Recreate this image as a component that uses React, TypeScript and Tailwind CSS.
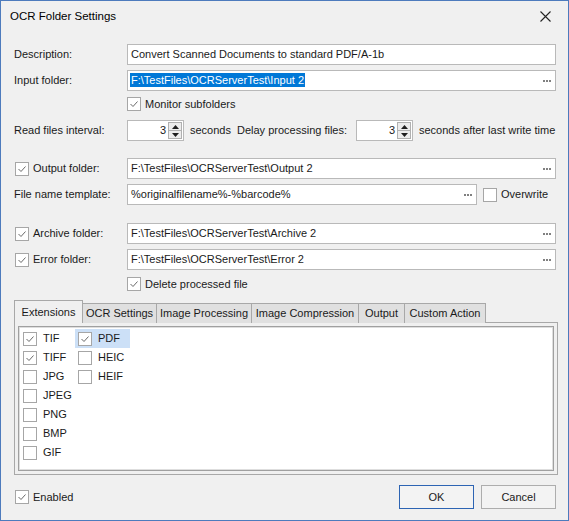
import React from "react";

function Check({ checked }: { checked?: boolean }) {
  return (
    <div className="w-[14px] h-[14px] shrink-0 bg-white border border-[#a6a6a6] flex items-center justify-center">
      {checked && (
        <svg width="12" height="12" viewBox="0 0 12 12">
          <polyline points="2.5,6 5,8.5 9.5,3.5" fill="none" stroke="#6a6a6a" strokeWidth="1" />
        </svg>
      )}
    </div>
  );
}

function Dots() {
  return (
    <svg width="8" height="2" viewBox="0 0 8 2" className="shrink-0">
      <rect x="0" y="0" width="2" height="2" fill="#808080" />
      <rect x="3" y="0" width="2" height="2" fill="#808080" />
      <rect x="6" y="0" width="2" height="2" fill="#808080" />
    </svg>
  );
}

function TextBox({ value, dots, selected, w }: { value: string; dots?: boolean; selected?: boolean; w?: string }) {
  return (
    <div className={`${w ?? "flex-1"} h-[21px] bg-white border border-[#b9b9b9] flex items-center pl-[2px] pr-[4px]`}>
      <div className="flex-1 min-w-0 whitespace-nowrap overflow-hidden leading-[15px]">
        {selected ? (
          <span className="bg-[#0078d7] text-white px-[1px] py-[1px]">{value}</span>
        ) : (
          <span className="pl-[1px]">{value}</span>
        )}
      </div>
      {dots && <Dots />}
    </div>
  );
}

function Spin({ value }: { value: string }) {
  return (
    <div className="w-[57px] h-[21px] bg-white border border-[#b9b9b9] flex items-stretch shrink-0">
      <div className="flex-1 flex items-center justify-end pr-[2px]">{value}</div>
      <div className="w-[14px] my-[1px] mr-[1px] flex flex-col border border-[#b0b0b0] bg-[#ececec]">
        <div className="flex-1 flex items-center justify-center border-b border-[#b0b0b0]">
          <svg width="7" height="4" viewBox="0 0 7 4">
            <polygon points="0,4 3.5,0 7,4" fill="#1e1e1e" />
          </svg>
        </div>
        <div className="flex-1 flex items-center justify-center">
          <svg width="7" height="4" viewBox="0 0 7 4">
            <polygon points="0,0 3.5,4 7,0" fill="#1e1e1e" />
          </svg>
        </div>
      </div>
    </div>
  );
}

function Item({ label, checked, hl }: { label: string; checked?: boolean; hl?: boolean }) {
  return (
    <div className={`w-[55px] h-[19px] flex items-center pl-[3px] gap-[6px] ${hl ? "bg-[#cce0f7]" : ""}`}>
      <Check checked={checked} />
      <span>{label}</span>
    </div>
  );
}

const tabs = [
  { label: "OCR Settings", w: "w-[75px]" },
  { label: "Image Processing", w: "w-[96px]" },
  { label: "Image Compression", w: "w-[108px]" },
  { label: "Output", w: "w-[47px]" },
  { label: "Custom Action", w: "w-[82px]" },
];

export default function App() {
  return (
    <div className="w-[569px] h-[521px] bg-[#f0f0f0] border border-[#4d7bbd] flex flex-col font-['Liberation_Sans',Arial,sans-serif] text-[11px] text-[#1a1a1a] leading-none overflow-hidden">
      <div className="h-[31px] shrink-0 flex items-center justify-between pl-[9px] pr-[17px]">
        <span className="text-[11.5px] text-black">OCR Folder Settings</span>
        <svg width="11" height="11" viewBox="0 0 11 11">
          <path d="M0.5 0.5 L10.5 10.5 M10.5 0.5 L0.5 10.5" stroke="#222" strokeWidth="1.1" />
        </svg>
      </div>

      <div className="flex flex-col pl-[13px] pr-[12px] pt-[12px]">
        <div className="flex items-center">
          <span className="w-[113px] shrink-0">Description:</span>
          <TextBox value="Convert Scanned Documents to standard PDF/A-1b" />
        </div>
        <div className="flex items-center mt-[5px]">
          <span className="w-[113px] shrink-0">Input folder:</span>
          <TextBox value="F:\TestFiles\OCRServerTest\Input 2" selected dots />
        </div>
        <div className="flex items-center h-[20px] mt-[3px] pl-[113px] gap-[4px]">
          <Check checked />
          <span>Monitor subfolders</span>
        </div>
        <div className="flex items-center mt-[6px]">
          <span className="w-[113px] shrink-0">Read files interval:</span>
          <Spin value="3" />
          <span className="ml-[6px] w-[47px]">seconds</span>
          <span className="w-[119px]">Delay processing files:</span>
          <Spin value="3" />
          <span className="ml-[6px] whitespace-nowrap">seconds after last write time</span>
        </div>
        <div className="flex items-center mt-[17px]">
          <div className="w-[113px] shrink-0 flex items-center gap-[4px] pl-[1px]">
            <Check checked />
            <span>Output folder:</span>
          </div>
          <TextBox value="F:\TestFiles\OCRServerTest\Output 2" dots />
        </div>
        <div className="flex items-center mt-[5px]">
          <span className="w-[113px] shrink-0">File name template:</span>
          <TextBox value="%originalfilename%-%barcode%" dots w="w-[350px]" />
          <div className="ml-[6px] flex items-center gap-[4px]">
            <Check />
            <span>Overwrite</span>
          </div>
        </div>
        <div className="flex items-center mt-[18px]">
          <div className="w-[113px] shrink-0 flex items-center gap-[4px] pl-[1px]">
            <Check checked />
            <span>Archive folder:</span>
          </div>
          <TextBox value="F:\TestFiles\OCRServerTest\Archive 2" dots />
        </div>
        <div className="flex items-center mt-[5px]">
          <div className="w-[113px] shrink-0 flex items-center gap-[4px] pl-[1px]">
            <Check checked />
            <span>Error folder:</span>
          </div>
          <TextBox value="F:\TestFiles\OCRServerTest\Error 2" dots />
        </div>
        <div className="flex items-center h-[20px] mt-[4px] pl-[113px] gap-[4px]">
          <Check checked />
          <span>Delete processed file</span>
        </div>

        <div className="mt-[6px] flex flex-col">
          <div className="flex items-end h-[23px] relative z-10">
            <div className="w-[69px] h-[23px] bg-[#f0f0f0] border border-b-0 border-[#a8a8a8] flex items-center justify-center">
              Extensions
            </div>
            {tabs.map((t) => (
              <div
                key={t.label}
                className={`${t.w} h-[20px] -ml-px bg-[#e0e0e0] border border-b-0 border-[#a8a8a8] flex items-center justify-center whitespace-nowrap`}
              >
                {t.label}
              </div>
            ))}
          </div>
          <div className="h-[153px] w-[544px] -mt-px border border-[#a8a8a8] bg-[#f0f0f0] p-[3px]">
            <div className="h-full border border-[#a0a0a0] bg-white">
              <div className="h-full border border-[#dedede] flex pt-[1px]">
                <div className="flex flex-col">
                  <Item label="TIF" checked />
                  <Item label="TIFF" checked />
                  <Item label="JPG" />
                  <Item label="JPEG" />
                  <Item label="PNG" />
                  <Item label="BMP" />
                  <Item label="GIF" />
                </div>
                <div className="flex flex-col">
                  <Item label="PDF" checked hl />
                  <Item label="HEIC" />
                  <Item label="HEIF" />
                </div>
              </div>
            </div>
          </div>
        </div>

        <div className="flex items-center h-[24px] mt-[10px]">
          <div className="flex items-center gap-[4px] pl-[1px]">
            <Check checked />
            <span>Enabled</span>
          </div>
          <div className="flex-1" />
          <button className="w-[75px] h-[24px] bg-[#f3f3f3] border border-[#2d64b3] flex items-center justify-center">
            OK
          </button>
          <button className="w-[75px] h-[24px] ml-[7px] bg-[#f3f3f3] border border-[#adadad] flex items-center justify-center">
            Cancel
          </button>
        </div>
      </div>
    </div>
  );
}
